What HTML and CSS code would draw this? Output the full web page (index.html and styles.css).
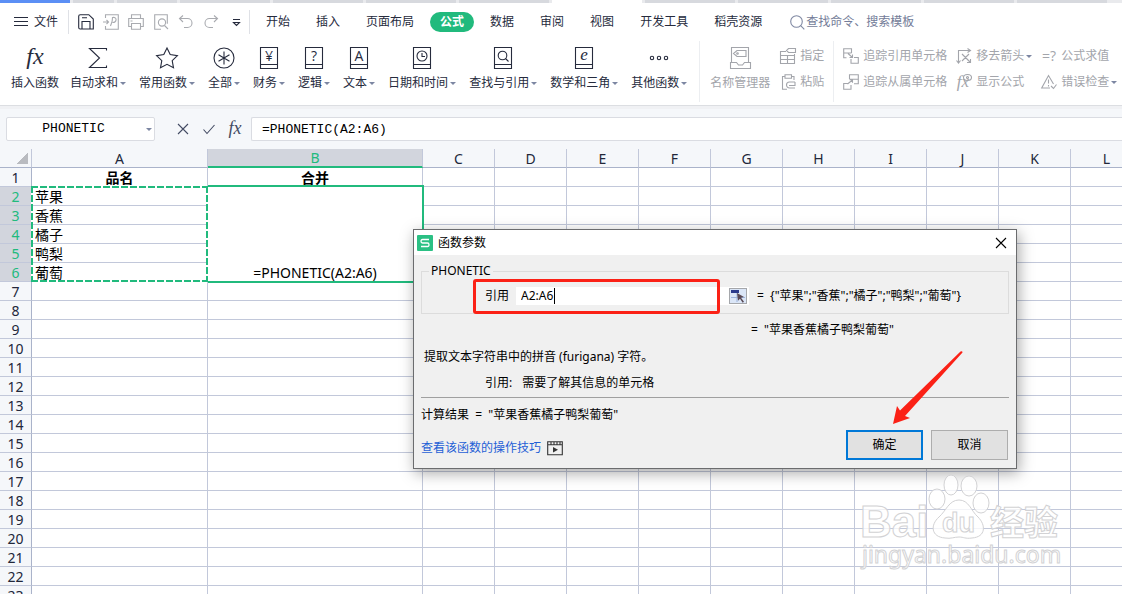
FILE: index.html
```
<!DOCTYPE html>
<html lang="zh-CN">
<head>
    <meta charset="UTF-8">
    <meta name="viewport" content="width=device-width, initial-scale=1.0">
    <title>函数参数 - PHONETIC</title>
    <link rel="stylesheet" href="styles.css">
</head>
<body>
    <div class="doc-tabs">
        <span class="doc-tab home"></span>
        <span class="doc-tab short"></span>
        <span class="doc-tab medium"></span>
        <span class="doc-tab"></span>
        <span class="doc-tab"></span>
        <span class="doc-tab"></span>
        <span class="doc-tab"></span>
        <span class="doc-tab current"></span>
        <span class="doc-tab"></span>
        <span class="doc-tab"></span>
        <span class="doc-tab"></span>
        <span class="doc-tab"></span>
        <span class="doc-tab"></span>
    </div>

    <header class="ribbon">
        <div class="menu-row">
            <button class="file-btn">
                <svg class="icon" width="14" height="12" viewBox="0 0 14 12"><path d="M0 1.500h14M0 5.500h14M0 9.500h14"/></svg>
                文件
            </button>
            <div class="quick-bar">
                <button class="quick dark" aria-label="保存"><svg class="icon" width="16" height="16" viewBox="0 0 16 16"><path d="M.7 2.2Q.7.7 2.2.7h8.600L15.300 5v10H2.200Q.700 15 .700 13.500zM4 15V7.500h8V15M4 3.700h5"/></svg></button>
                <button class="quick" aria-label="输出为PDF"><svg class="icon" width="16" height="16" viewBox="0 0 16 16"><path d="M2.500 4V.700h12.800v14.600H2.500V12M0 8h5.500M3.500 6l2 2-2 2M7.500 12c1-3 2-4 2-8.500 5-1 4.500 5 0 5"/></svg></button>
                <button class="quick" aria-label="打印"><svg class="icon" width="16" height="16" viewBox="0 0 16 16"><path d="M3.500 4.500V.700h9v3.800M3.500 12.500H.700v-8h14.600v8h-2.800M3.500 9.500h9v5.800h-9zM2.500 7h2"/></svg></button>
                <button class="quick" aria-label="打印预览"><svg class="icon" width="16" height="16" viewBox="0 0 16 16"><path d="M8 15.300H1.700V.700h12.600v9"/><circle cx="9" cy="8.500" r="3.600"/><path d="M11.500 11.500l3.500 3.500"/></svg></button>
                <button class="quick" aria-label="撤销"><svg class="icon" width="16" height="16" viewBox="0 0 16 16"><path d="M5 1.500L1.500 4.500 5 8M2 4.500h7.500a4.500 4.500 0 0 1 0 9H6"/></svg></button>
                <button class="quick" aria-label="恢复"><svg class="icon" width="16" height="16" viewBox="0 0 16 16"><path d="M11 1.500l3.500 3L11 8M14 4.500H6.500a4.500 4.500 0 0 0 0 9H10"/></svg></button>
                <button class="quick dark" aria-label="自定义"><svg class="icon" width="16" height="16" viewBox="0 0 16 16"><path d="M5 5.500h7M5.500 8.500l3 3 3-3z"/></svg></button>
            </div>
            <nav class="menu">
                <a href="#">开始</a>
                <a href="#">插入</a>
                <a href="#">页面布局</a>
                <a href="#" class="active">公式</a>
                <a href="#">数据</a>
                <a href="#">审阅</a>
                <a href="#">视图</a>
                <a href="#">开发工具</a>
                <a href="#">稻壳资源</a>
            </nav>
            <label class="search">
                <svg class="icon" width="15" height="15" viewBox="0 0 15 15"><circle cx="6.500" cy="6.500" r="5.800"/><path d="M10.700 10.700l3.600 3.600"/></svg>
                <input type="text" placeholder="查找命令、搜索模板" aria-label="查找命令、搜索模板">
            </label>
        </div>

        <div class="tool-row">
            <div class="group single">
                <button class="tool">
                    <svg class="icon" width="24" height="24" viewBox="0 0 24 24"><text class="fx" x="12" y="18" font-size="24">fx</text></svg>
                    <span>插入函数</span>
                </button>
            </div>
            <div class="group">
                <button class="tool">
                    <svg class="icon" width="24" height="24" viewBox="0 0 24 24"><path d="M20.500 4.500V2.500h-17L13.500 12l-10 9.500h17v-2"/></svg>
                    <span class="drop">自动求和</span>
                </button>
                <button class="tool">
                    <svg class="icon" width="24" height="24" viewBox="0 0 24 24"><path d="M12 2l3.200 6.600 7.200 1-5.200 5 1.300 7.200L12 18.300l-6.500 3.500 1.300-7.200-5.200-5 7.200-1z"/></svg>
                    <span class="drop">常用函数</span>
                </button>
                <button class="tool">
                    <svg class="icon" width="24" height="24" viewBox="0 0 24 24"><circle cx="12" cy="12" r="10"/><path d="M12 5.500v13M6.500 8.700l11 6.600M17.500 8.700l-11 6.600"/></svg>
                    <span class="drop">全部</span>
                </button>
                <button class="tool">
                    <svg class="icon" width="24" height="24" viewBox="0 0 24 24"><path d="M3.500 1.500h17v21h-17zM3.500 18.500h17"/><text x="12" y="15" font-size="14">¥</text></svg>
                    <span class="drop">财务</span>
                </button>
                <button class="tool">
                    <svg class="icon" width="24" height="24" viewBox="0 0 24 24"><path d="M3.500 1.500h17v21h-17zM3.500 18.500h17"/><text x="12" y="15" font-size="14">?</text></svg>
                    <span class="drop">逻辑</span>
                </button>
                <button class="tool">
                    <svg class="icon" width="24" height="24" viewBox="0 0 24 24"><path d="M3.500 1.500h17v21h-17zM3.500 18.500h17"/><text x="12" y="15" font-size="14">A</text></svg>
                    <span class="drop">文本</span>
                </button>
                <button class="tool">
                    <svg class="icon" width="24" height="24" viewBox="0 0 24 24"><path d="M3.500 1.500h17v21h-17zM3.500 18.500h17"/><circle cx="12" cy="10" r="5"/><path d="M12 7V10.500h3"/></svg>
                    <span class="drop">日期和时间</span>
                </button>
                <button class="tool">
                    <svg class="icon" width="24" height="24" viewBox="0 0 24 24"><path d="M3.500 1.500h17v21h-17zM3.500 18.500h17"/><circle cx="11.500" cy="9.500" r="4.300"/><path d="M14.500 12.500l3 3"/></svg>
                    <span class="drop">查找与引用</span>
                </button>
                <button class="tool">
                    <svg class="icon" width="24" height="24" viewBox="0 0 24 24"><path d="M3.500 1.500h17v21h-17zM3.500 18.500h17"/><text class="italic" x="12" y="14" font-size="17">e</text></svg>
                    <span class="drop">数学和三角</span>
                </button>
                <button class="tool">
                    <svg class="icon" width="24" height="24" viewBox="0 0 24 24"><circle cx="5" cy="12" r="1.700"/><circle cx="12" cy="12" r="1.700"/><circle cx="19" cy="12" r="1.700"/></svg>
                    <span class="drop">其他函数</span>
                </button>
            </div>
            <div class="group names">
                <button class="tool" disabled>
                    <svg class="icon" width="24" height="24" viewBox="0 0 24 24"><path d="M3.500 16.500v-15h17v15M2.500 22.500v-6h6l2 2.500h4l2-2.500h6v6zM9 4.500h9v6H9L5.500 7.500z"/><circle cx="9.500" cy="7.500" r=".8"/></svg>
                    <span>名称管理器</span>
                </button>
                <div class="tool-stack">
                    <button class="tool-small" disabled>
                        <svg class="icon" width="16" height="16" viewBox="0 0 16 16"><path d="M6 3.500H.500v12h14V6M.500 7.500h14M.500 11.500h14M7.500 7v8.500M8.500.500h7v4h-7L6.500 2.500z"/></svg>
                        <span>指定</span>
                    </button>
                    <button class="tool-small" disabled>
                        <svg class="icon" width="16" height="16" viewBox="0 0 16 16"><path d="M7 15.300H2.500V2.500h2.500M11.500 2.500H14V6M5 .700h6.500v3.500H5zM15 14H9.500a3 3 0 0 1 0-6H15M15 8v3.500H9"/></svg>
                        <span>粘贴</span>
                    </button>
                </div>
            </div>
            <div class="group audit">
                <div class="tool-stack">
                    <button class="tool-small" disabled>
                        <svg class="icon" width="16" height="16" viewBox="0 0 16 16"><path d="M8.500 5V.700H.700v9h2.800M.700 5h7.800M5 5.500l4.500 4M9.500 6.500v3h-3M8 11v4.300h7.300V9.500H11"/></svg>
                        <span>追踪引用单元格</span>
                    </button>
                    <button class="tool-small" disabled>
                        <svg class="icon" width="16" height="16" viewBox="0 0 16 16"><path d="M6.500 5V.700h8.800v9H11M6.500 5.200h8.800M4.500 10l5-4M6.500 5.700h3v3M5 9.500H.700v5.800H8V11"/></svg>
                        <span>追踪从属单元格</span>
                    </button>
                </div>
                <div class="tool-stack">
                    <button class="tool-small" disabled>
                        <svg class="icon" width="16" height="16" viewBox="0 0 16 16"><path d="M2.500 15V2.500H14M11.500.500l3 2-3 2M.500 12.500l2 2.500 2-2.500M6 6l8 8M13 6l-7 7M14.500 11v3.500H11"/></svg>
                        <span class="drop">移去箭头</span>
                    </button>
                    <button class="tool-small" disabled>
                        <svg class="icon" width="16" height="16" viewBox="0 0 16 16"><text class="fx" x="7" y="13" font-size="17">fx</text><ellipse cx="11.500" cy="3.500" rx="4" ry="3"/><circle cx="11.500" cy="3.500" r="1"/></svg>
                        <span>显示公式</span>
                    </button>
                </div>
                <div class="tool-stack">
                    <button class="tool-small" disabled>
                        <svg class="icon" width="16" height="16" viewBox="0 0 16 16"><text x="8" y="13" font-size="14">=?</text></svg>
                        <span>公式求值</span>
                    </button>
                    <button class="tool-small" disabled>
                        <svg class="icon" width="16" height="16" viewBox="0 0 16 16"><path d="M9 14H.700L7.500 1.500l5 8.500M7.500 5.500v4M7.500 11v1.500M10 12l2.500 2.500 3-4"/></svg>
                        <span class="drop">错误检查</span>
                    </button>
                </div>
            </div>
        </div>
    </header>

    <div class="formula-bar">
        <label class="name-box drop">
            <input type="text" value="PHONETIC" aria-label="名称框">
        </label>
        <div class="formula-actions">
            <button aria-label="取消输入"><svg class="icon" width="16" height="16" viewBox="0 0 16 16"><path d="M3 3l10 10M13 3L3 13"/></svg></button>
            <button aria-label="确认输入"><svg class="icon" width="16" height="16" viewBox="0 0 16 16"><path d="M2.500 8.500l3.500 4 7.500-8.500"/></svg></button>
            <button aria-label="插入函数"><svg class="icon" width="16" height="16" viewBox="0 0 16 16"><text class="fx" x="8" y="13" font-size="18">fx</text></svg></button>
        </div>
        <input class="formula-input" type="text" value="=PHONETIC(A2:A6)" aria-label="编辑栏">
    </div>

    <main class="sheet-area">
        <table class="sheet">
            <colgroup>
                <col class="col-head">
                <col class="col-a">
                <col class="col-b">
                <col span="10">
            </colgroup>
            <thead>
                <tr>
                    <th class="corner"></th>
                    <th>A</th>
                    <th class="selected">B</th>
                    <th>C</th>
                    <th>D</th>
                    <th>E</th>
                    <th>F</th>
                    <th>G</th>
                    <th>H</th>
                    <th>I</th>
                    <th>J</th>
                    <th>K</th>
                    <th>L</th>
                </tr>
            </thead>
            <tbody id="rows">
                <tr>
                    <th>1</th>
                    <td class="title">品名</td>
                    <td class="title">合并</td>
                </tr>
                <tr class="picked">
                    <th>2</th>
                    <td>苹果<span class="range"></span></td>
                    <td class="merged" rowspan="5">=PHONETIC(A2:A6)</td>
                </tr>
                <tr class="picked">
                    <th>3</th>
                    <td>香蕉</td>
                </tr>
                <tr class="picked">
                    <th>4</th>
                    <td>橘子</td>
                </tr>
                <tr class="picked">
                    <th>5</th>
                    <td>鸭梨</td>
                </tr>
                <tr class="picked">
                    <th>6</th>
                    <td>葡萄</td>
                </tr>
            </tbody>
        </table>
    </main>

    <section class="dialog" role="dialog" aria-labelledby="dialog-title">
        <div class="dialog-title">
            <svg class="logo" width="16" height="16" viewBox="0 0 16 16"><rect width="16" height="16" rx="1"/><path d="M12 4.500H5.500Q4 4.500 4 6.200T5.500 8h5Q12 8 12 9.800t-1.500 1.700H4"/></svg>
            <h1 id="dialog-title">函数参数</h1>
            <button class="close" aria-label="关闭"><svg class="icon" width="12" height="12" viewBox="0 0 12 12"><path d="M1 1l10 10M11 1L1 11"/></svg></button>
        </div>
        <div class="dialog-body">
            <fieldset class="args">
                <legend>PHONETIC</legend>
                <label for="ref">引用</label>
                <div class="ref-box">
                    <input type="text" id="ref" value="A2:A6">
                    <span class="caret"></span>
                    <button class="picker" aria-label="选择区域">
                        <svg width="16" height="14" viewBox="0 0 16 14"><rect width="16" height="14" fill="#dbe6f7"/><path d="M1 1h8v3H1z" fill="#2b3a8c"/><path d="M1 8.500h14M7 4v9" stroke="#9db4dd" fill="none"/><path d="M7 4l7 4-3 .8 3 4-1.300 1-2.700-4-2 2z" fill="#5a4a55"/></svg>
                    </button>
                </div>
                <output class="equals">=&nbsp; {"苹果";"香蕉";"橘子";"鸭梨";"葡萄"}</output>
                <span class="mark"></span>
            </fieldset>
            <p class="value">=&nbsp; "苹果香蕉橘子鸭梨葡萄"</p>
            <p class="about">提取文本字符串中的拼音 (furigana) 字符。</p>
            <dl class="hint">
                <dt>引用:</dt>
                <dd>需要了解其信息的单元格</dd>
            </dl>
            <p class="result">计算结果&nbsp; =&nbsp; "苹果香蕉橘子鸭梨葡萄"</p>
            <div class="dialog-foot">
                <a href="#">查看该函数的操作技巧
                    <svg class="icon" width="16" height="16" viewBox="0 0 16 16"><path d="M.700 1.700h14.600v13H.700zM.700 4.700h14.600M4 1.700v3M7 1.700v3M10 1.700v3M13 1.700v3"/><path d="M6 7l5 2.800-5 2.700z" fill="currentColor" stroke="none"/></svg>
                </a>
                <div class="buttons">
                    <button class="btn primary">确定</button>
                    <button class="btn">取消</button>
                </div>
            </div>
        </div>
        <svg class="arrow" width="72" height="76" viewBox="0 0 72 76"><path d="M1 74L5 56l3 4.500L68.500 1.500q2-1 2 1L13 66l5 2z"/></svg>
    </section>

    <svg class="watermark" width="210" height="106" viewBox="0 0 210 106">
        <g>
            <text class="wm-latin" x="3" y="68" font-size="44">Bai</text>
            <ellipse cx="80" cy="30" rx="8" ry="10"/>
            <ellipse cx="94" cy="16" rx="7" ry="10"/>
            <ellipse cx="112" cy="17" rx="8" ry="10"/>
            <ellipse cx="124" cy="34" rx="8" ry="10"/>
            <path d="M102 31c10 0 12 11 19 17 8 8 8 20-6 21-7 1-8-1-13-1s-8 2-14 1c-14-1-15-13-6-21 7-6 10-17 20-17z"/>
            <text class="wm-latin" x="85" y="63" font-size="27">du</text>
            <text class="wm-cjk" x="133" y="66" font-size="34">经验</text>
            <text class="wm-url" x="5" y="94" font-size="23">jingyan.baidu.com</text>
        </g>
    </svg>

    <script src="script.js"></script>
</body>
</html>
```
FILE: styles.css
```
* {
    box-sizing: border-box;
    margin: 0;
    padding: 0;
}
html, body {
    height: 100%;
}
body {
    display: flex;
    flex-direction: column;
    overflow: hidden;
    position: relative;
    font-family: "Noto Sans", "Noto Sans CJK SC", sans-serif;
    font-size: 12px;
    line-height: 16px;
    color: #262b3d;
    background-color: #fff;
}
button, input {
    font: inherit;
    color: inherit;
    border: none;
    background: none;
}
a {
    color: inherit;
    text-decoration: none;
}
.icon {
    flex: none;
    overflow: visible;
    fill: none;
    stroke: currentColor;
    stroke-width: 1.1;
}
.icon text {
    fill: currentColor;
    stroke: none;
    text-anchor: middle;
    font-family: "Open Sans", sans-serif;
}
.icon .fx, .icon .italic {
    font-family: "Liberation Serif", serif;
    font-style: italic;
}

/* 文档标签 */
.doc-tabs {
    display: flex;
    gap: 3px;
    height: 3px;
    flex: none;
    overflow: hidden;
    background-color: #e9eaed;
}
.doc-tab {
    flex: none;
    width: 90px;
    background-color: #d7d9de;
}
.doc-tab.home {
    width: 70px;
    background-color: #5b8ff5;
}
.doc-tab.short {
    width: 41px;
}
.doc-tab.medium {
    width: 60px;
}
.doc-tab.current {
    background-color: #fff;
}

/* 功能区 */
.ribbon {
    flex: none;
    border-bottom: 1px solid #dcdee2;
}
.menu-row {
    display: flex;
    align-items: center;
    height: 38px;
    white-space: nowrap;
}
.file-btn {
    display: flex;
    align-items: center;
    gap: 6px;
    height: 24px;
    padding: 0 10px 0 14px;
    border-right: 1px solid #dfe1e6;
}
.quick-bar {
    display: flex;
    align-items: center;
    gap: 9px;
    height: 24px;
    padding: 0 5px 0 9px;
    border-right: 1px solid #dfe1e6;
}
.quick {
    display: flex;
    color: #a9abb0;
}
.quick.dark {
    color: #262b3d;
}
.menu {
    display: flex;
    gap: 6px;
    padding-left: 6px;
}
.menu a {
    padding: 2px 10px;
    border-radius: 10px;
}
.menu .active {
    color: #fff;
    font-weight: bold;
    background-color: #21ba7d;
}
.search {
    display: flex;
    align-items: center;
    gap: 1px;
    padding-left: 18px;
    color: #8089a3;
}
.search input::placeholder {
    color: #737c98;
}
.tool-row {
    display: flex;
    height: 64px;
    white-space: nowrap;
}
.group {
    display: flex;
    align-items: flex-start;
    gap: 13px;
    height: 61px;
    padding-right: 12px;
    border-right: 1px solid #eceef1;
}
.group.single {
    padding: 0 11px;
    border: none;
}
.group.names {
    gap: 10px;
    padding: 0 9px 0 10px;
}
.group.audit {
    gap: 9px;
    padding: 0 0 0 9px;
    border: none;
}
.tool {
    display: flex;
    flex-direction: column;
    align-items: center;
    gap: 5px;
    padding-top: 5px;
}
.tool:disabled, .tool-small:disabled {
    color: #a3a5ab;
}
.drop {
    display: flex;
    align-items: center;
    gap: 2px;
}
.drop::after {
    content: "";
    width: 0;
    border: 3px solid transparent;
    border-top-color: #7c86a2;
    border-bottom: none;
}
.tool-stack {
    display: flex;
    flex-direction: column;
    gap: 10px;
    padding-top: 7px;
}
.tool-small {
    display: flex;
    align-items: center;
    gap: 4px;
}

/* 编辑栏 */
.formula-bar {
    display: flex;
    align-items: center;
    flex: none;
    height: 43px;
    padding-left: 6px;
    background-color: #f5f7fa;
    border-top: 3px solid #f0f1f4;
    font-family: "Liberation Mono", monospace;
    font-size: 13px;
    color: #000;
}
.name-box {
    width: 149px;
    height: 24px;
    padding-right: 2px;
    border: 1px solid #dadce2;
    border-radius: 2px;
    background-color: #fff;
}
.name-box input {
    flex: 1;
    min-width: 0;
    padding-right: 4px;
    text-align: center;
}
.formula-actions {
    display: flex;
    gap: 10px;
    padding: 0 8px 0 20px;
    color: #434b63;
}
.formula-actions button {
    display: flex;
}
.formula-input {
    flex: 1;
    min-width: 0;
    height: 24px;
    padding-left: 10px;
    border: 1px solid #dadce2;
    border-right: none;
    border-radius: 2px 0 0 2px;
    background-color: #fff;
}

/* 表格 */
.sheet-area {
    flex: 1;
    min-height: 0;
    overflow: hidden;
}
.sheet {
    table-layout: fixed;
    width: 1143px;
    border-spacing: 0;
    font-size: 14px;
    line-height: 16px;
    color: #000;
}
.sheet col {
    width: 72px;
}
.sheet .col-head {
    width: 32px;
}
.sheet .col-a {
    width: 176px;
}
.sheet .col-b {
    width: 215px;
}
.sheet th, .sheet td {
    height: 19px;
    padding-top: 2px;
    border-right: 1px solid #c2c8da;
    border-bottom: 1px solid #c2c8da;
    white-space: nowrap;
}
.sheet th {
    font-weight: normal;
    color: #22273a;
    background-color: #f5f7fa;
}
.sheet thead th {
    padding-top: 1px;
    border-bottom-color: #aab3ca;
}
.sheet tbody th {
    border-right-color: #aab3ca;
}
.sheet td {
    position: relative;
    padding-left: 3px;
}
.sheet thead .selected {
    color: #21ba7d;
    background-color: #d2d5dd;
    border-bottom: 2px solid #21ba7d;
}
.sheet .picked th {
    color: #21ba7d;
    background-color: #d2d5dd;
}
.sheet .corner {
    background-image: linear-gradient(135deg, transparent 50%, #b9bbc0 50%);
    background-size: 11px 11px;
    background-position: 17px 4px;
    background-repeat: no-repeat;
}
.sheet .title {
    padding-left: 0;
    text-align: center;
    font-weight: bold;
}
.sheet .merged {
    padding-left: 0;
    text-align: center;
    vertical-align: bottom;
}
.merged::after {
    content: "";
    position: absolute;
    inset: -2px -2px -2px 0;
    border: 2px solid #21ba7d;
    border-left: none;
    z-index: 1;
}
.range {
    position: absolute;
    z-index: 1;
    left: -1px;
    top: -1px;
    width: 177px;
    height: 96px;
    background-image:
        repeating-linear-gradient(90deg, #21ba7d 0 7px, #fff 7px 9px),
        repeating-linear-gradient(90deg, #21ba7d 0 7px, #fff 7px 9px),
        repeating-linear-gradient(#21ba7d 0 7px, #fff 7px 9px),
        repeating-linear-gradient(#21ba7d 0 7px, #fff 7px 9px);
    background-size: 100% 2px, 100% 2px, 2px 100%, 2px 100%;
    background-position: top, bottom, left, right;
    background-repeat: no-repeat;
}

/* 函数参数对话框 */
.dialog {
    position: absolute;
    z-index: 2;
    left: 413px;
    top: 229px;
    width: 604px;
    border: 1px solid #6b6c6e;
    background-color: #f0f0f0;
    box-shadow: 2px 4px 14px rgba(0, 0, 0, 0.35);
    color: #000;
    white-space: nowrap;
}
.dialog-title {
    display: flex;
    align-items: center;
    gap: 5px;
    height: 25px;
    padding: 0 9px 0 3px;
    background-color: #fff;
}
.dialog-title h1 {
    flex: 1;
    font-size: 12px;
    font-weight: normal;
}
.logo rect {
    fill: #2bc084;
}
.logo path {
    fill: none;
    stroke: #fff;
    stroke-width: 1.3;
}
.close {
    display: flex;
}
.dialog-body {
    padding: 8px 7px;
}
.args {
    display: flex;
    align-items: center;
    position: relative;
    height: 51px;
    padding-left: 63px;
    border: 1px solid #dcdcdc;
}
.args legend {
    margin-left: -56px;
    padding: 0 2px;
}
.ref-box {
    display: flex;
    align-items: center;
    position: relative;
    width: 233px;
    height: 18px;
    margin: 0 8px 0 7px;
    padding-right: 2px;
    background-color: #fff;
}
.ref-box input {
    flex: 1;
    min-width: 0;
    padding-left: 5px;
    outline: none;
}
.caret {
    position: absolute;
    left: 38px;
    top: 1px;
    width: 1px;
    height: 16px;
    background-color: #000;
}
.picker {
    display: flex;
    border: 1px solid #a5a7ab;
}
.mark {
    position: absolute;
    left: 51px;
    bottom: -1px;
    width: 247px;
    height: 35px;
    border: 3px solid #fb2116;
    border-radius: 3px;
}
.value {
    padding: 8px 0 0 330px;
}
.about {
    padding: 11px 0 0 3px;
}
.hint {
    display: flex;
    gap: 10px;
    padding: 10px 0 6px 64px;
    border-bottom: 1px solid #a0a0a0;
}
.result {
    padding-top: 9px;
}
.dialog-foot {
    display: flex;
    align-items: center;
    justify-content: space-between;
    padding-top: 7px;
}
.dialog-foot a {
    display: flex;
    align-items: center;
    gap: 6px;
    padding-top: 6px;
    color: #1f5fd6;
}
.dialog-foot .icon {
    color: #333;
}
.buttons {
    display: flex;
    gap: 8px;
    padding-right: 1px;
}
.btn {
    width: 77px;
    height: 30px;
    border: 1px solid #adadad;
    background-color: #e1e1e1;
}
.btn.primary {
    border: 2px solid #0078d7;
}
.arrow {
    position: absolute;
    left: 478px;
    top: 120px;
    fill: #fb2116;
}

/* 水印 */
.watermark {
    position: absolute;
    right: 55px;
    bottom: 19px;
    z-index: 3;
    fill: rgba(255, 255, 255, 0.8);
    stroke: #d2d2d4;
    stroke-width: 1;
}
.wm-latin {
    font-family: "Liberation Sans", sans-serif;
    font-weight: bold;
}
.wm-cjk {
    font-family: "Noto Sans CJK SC", sans-serif;
    font-weight: bold;
}
.wm-url {
    font-family: "Noto Sans", sans-serif;
}
```
FILE: script.js
```
const rows = document.getElementById('rows');
const columnCount = 12;

// 补齐已有行的空单元格
[...rows.rows].forEach((row, index) => {
    const filled = index > 1 ? 2 : row.cells.length - 1;
    for (let i = filled; i < columnCount; i++) {
        row.insertCell();
    }
});

// 剩余的空行
for (let n = 7; n <= 23; n++) {
    const row = rows.insertRow();
    const head = document.createElement('th');
    head.textContent = n;
    row.appendChild(head);
    for (let i = 0; i < columnCount; i++) {
        row.insertCell();
    }
}
```
